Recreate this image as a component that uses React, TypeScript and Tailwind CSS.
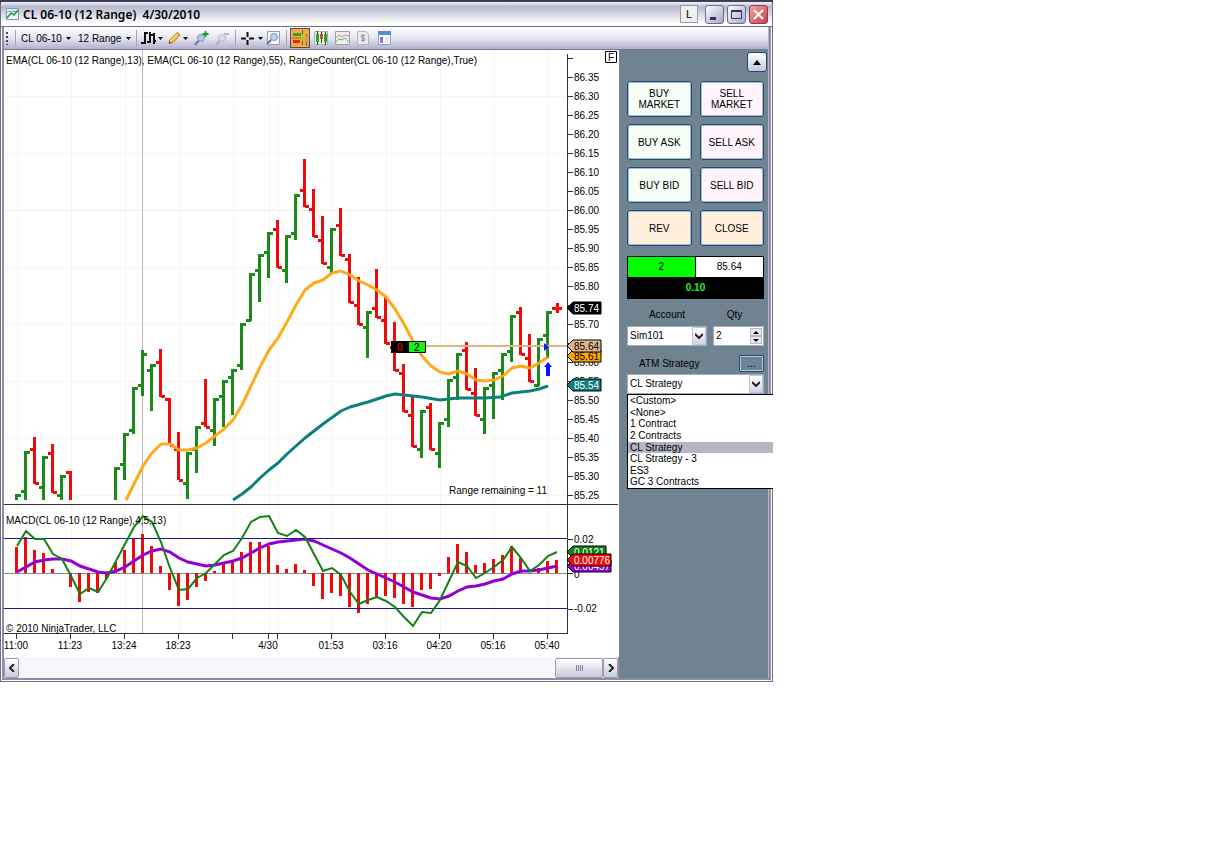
// App.tsx
// Chart window: title bar, toolbar, price + MACD chart and the order entry panel.

import { useState, type ReactNode } from 'react'

// One bar: x, high, low, open, close (canvas units), up or down
type Bar = [number, number, number, number, number, 'u' | 'd']

const BARS: Bar[] = [
  [17, 494, 500, 0, 495, 'u'],
  [26, 451, 500, 491, 452, 'u'],
  [35, 437, 484, 449, 483, 'd'],
  [44, 456, 500, 487, 457, 'u'],
  [53, 444, 493, 453, 492, 'd'],
  [62, 475, 500, 495, 476, 'u'],
  [71, 471, 500, 472, 0, 'd'],
  [116, 467, 500, 0, 468, 'u'],
  [125, 433, 480, 464, 434, 'u'],
  [134, 387, 434, 430, 388, 'u'],
  [143, 350, 396, 385, 354, 'u'],
  [152, 364, 411, 370, 365, 'u'],
  [161, 349, 397, 362, 396, 'd'],
  [170, 398, 445, 399, 445, 'd'],
  [179, 432, 480, 449, 480, 'd'],
  [188, 452, 499, 483, 453, 'u'],
  [197, 426, 473, 449, 427, 'u'],
  [206, 379, 427, 423, 427, 'd'],
  [215, 398, 446, 430, 399, 'u'],
  [224, 380, 427, 396, 381, 'u'],
  [233, 369, 415, 377, 370, 'u'],
  [242, 323, 370, 365, 324, 'u'],
  [251, 273, 321, 320, 274, 'u'],
  [260, 254, 302, 270, 255, 'u'],
  [269, 232, 278, 252, 233, 'u'],
  [278, 220, 268, 229, 267, 'd'],
  [287, 235, 283, 270, 236, 'u'],
  [296, 194, 240, 233, 195, 'u'],
  [305, 159, 207, 190, 206, 'd'],
  [314, 189, 237, 209, 236, 'd'],
  [323, 216, 264, 240, 263, 'd'],
  [332, 228, 274, 267, 229, 'u'],
  [341, 208, 256, 225, 255, 'd'],
  [350, 254, 303, 259, 302, 'd'],
  [359, 277, 325, 305, 324, 'd'],
  [368, 311, 358, 327, 312, 'u'],
  [377, 269, 318, 308, 317, 'd'],
  [386, 296, 344, 320, 343, 'd'],
  [395, 322, 371, 347, 370, 'd'],
  [404, 364, 412, 373, 411, 'd'],
  [413, 397, 447, 415, 446, 'd'],
  [422, 410, 458, 449, 411, 'u'],
  [431, 403, 450, 407, 449, 'd'],
  [440, 422, 468, 453, 423, 'u'],
  [449, 379, 427, 419, 380, 'u'],
  [458, 353, 400, 377, 354, 'u'],
  [467, 342, 390, 350, 389, 'd'],
  [476, 368, 416, 393, 415, 'd'],
  [485, 387, 434, 419, 388, 'u'],
  [494, 372, 419, 385, 373, 'u'],
  [503, 353, 400, 370, 354, 'u'],
  [512, 315, 362, 351, 316, 'u'],
  [521, 307, 355, 312, 354, 'd'],
  [530, 334, 382, 358, 381, 'd'],
  [539, 338, 386, 385, 339, 'u'],
  [548, 311, 358, 335, 312, 'u'],
]

const EMA_FAST =
  '126,500 134,484 143,466 152,453 161,444 170,444 179,450 188,450 197,448 206,443 215,436 224,429 233,420 242,405 251,386 260,367 269,350 278,338 287,322 296,305 305,290 314,283 323,280 332,273 341,271 350,275 359,281 368,285 377,290 386,297 395,309 404,324 413,341 422,356 431,366 440,372 449,374 458,371 467,374 476,380 485,381 494,380 503,376 512,368 521,366 530,368 539,363 548,357'
const EMA_SLOW =
  '233,500 242,494 251,487 260,478 269,470 278,463 287,454 305,438 323,424 341,411 350,407 368,402 386,396 395,394 404,395 422,397 440,400 449,399 458,398 485,398 500,397 512,393 530,391 539,389 548,386'

// Histogram tips and the two MACD lines, one value per bar
const HISTOGRAM = [
  547, 537, 550, 553, 569, 573, 587, 602, 592, 593, 579, 562, 550, 539, 534, 546, 566, 590, 606, 600,
  587, 581, 571, 564, 562, 552, 542, 542, 546, 565, 569, 564, 570, 586, 599, 593, 596, 607, 613, 604,
  597, 596, 598, 604, 607, 590, 589, 576, 557, 544, 552, 565, 563, 559, 555, 546, 558, 573, 568, 561,
  560,
]
const MACD_LINE = [
  546, 531, 539, 539, 554, 559, 576, 594, 588, 592, 578, 561, 544, 527, 516, 522, 542, 568, 590, 589,
  578, 573, 564, 555, 551, 538, 522, 517, 516, 533, 536, 530, 537, 554, 571, 568, 575, 592, 604, 600,
  597, 601, 607, 617, 626, 612, 613, 600, 581, 562, 566, 578, 573, 567, 560, 547, 558, 571, 565, 556,
  552,
]
const SIGNAL_LINE = [
  572, 567, 562, 560, 559, 559, 561, 566, 569, 572, 573, 571, 567, 561, 555, 551, 549, 552, 558, 562,
  564, 566, 565, 563, 561, 558, 553, 548, 544, 542, 541, 540, 539, 541, 545, 549, 553, 558, 564, 570,
  574, 578, 582, 587, 592, 595, 598, 599, 596, 591, 587, 586, 584, 581, 579, 574, 571, 571, 570, 568,
  566,
]

const TIMES: [number, string][] = [
  [17, '11:00'],
  [71, '11:23'],
  [125, '13:24'],
  [179, '18:23'],
  [233, ''],
  [269, '4/30'],
  [278, ''],
  [332, '01:53'],
  [386, '03:16'],
  [440, '04:20'],
  [494, '05:16'],
  [548, '05:40'],
]

const PRICES = Array.from({ length: 23 }, (_, i) => 86.35 - i * 0.05)
// These axis labels sit fully behind a price tag
const COVERED = ['85.75', '85.65']
const STRATEGIES = ['<Custom>', '<None>', '1 Contract', '2 Contracts', 'CL Strategy', 'CL Strategy - 3', 'ES3', 'GC 3 Contracts']

const priceY = (price: number) => Math.round(210 + (86 - price) * 380)
const toPoints = (values: number[]) => values.map((y, i) => `${17 + i * 9},${y}`).join(' ')

function PriceTag({ y, right, fill, color, text }: { y: number; right: number; fill: string; color: string; text: string }) {
  return (
    <g>
      <path d={`M567 ${y}L573 ${y - 6}H${right}V${y + 6}H573Z`} fill={fill} stroke="#000" strokeWidth="1" />
      <text x="574" y={y + 4} fill={color}>
        {text}
      </text>
    </g>
  )
}

function Chart() {
  return (
    <svg viewBox="4 50 615 607" className="block w-full bg-white font-['Liberation_Sans',sans-serif] text-[10px]" role="img" aria-label="CL 06-10 price chart">
      {/* Grid */}
      <g stroke="#f6f6ef" shapeRendering="crispEdges">
        {TIMES.map(([x]) => (
          <path key={x} d={`M${x}.5 50V633`} />
        ))}
        {[96, 153, 210, 267, 324, 381, 438, 495].map((y) => (
          <path key={y} d={`M4 ${y}.5H567`} stroke={y === 210 ? '#efefe0' : '#f6f6ef'} />
        ))}
      </g>
      <path d="M142.5 50V633" stroke="#b8b8b8" />

      {/* Axes */}
      <g stroke="#333" shapeRendering="crispEdges">
        <path d="M4 504.5H618M4 633.5H567.5M567.5 54V633.5M567 58.5H573" />
        {PRICES.map((p) => (
          <path key={p} d={`M567 ${priceY(p)}.5H573`} />
        ))}
        {TIMES.map(([x]) => (
          <path key={x} d={`M${x - 1}.5 633V639`} />
        ))}
        <path d="M567 539.5H573M567 573.5H573M567 609.5H573" />
      </g>
      {PRICES.filter((p) => !COVERED.includes(p.toFixed(2))).map((p) => (
        <text key={p} x="574" y={priceY(p) + 4}>
          {p.toFixed(2)}
        </text>
      ))}
      <text x="574" y="543">0.02</text>
      <text x="574" y="578">0</text>
      <text x="574" y="612">-0.02</text>
      {TIMES.map(([x, label]) => (
        <text key={x} x={x - 1} y="649" textAnchor="middle">
          {label}
        </text>
      ))}

      {/* Price bars */}
      <g strokeWidth="3" fill="none" shapeRendering="crispEdges">
        {BARS.map(([x, high, low, open, close, dir]) => (
          <path
            key={x}
            stroke={dir === 'u' ? '#1b8a1b' : '#f00a0a'}
            d={`M${x - 0.5} ${high}V${low}${open ? `M${x - 5} ${open}.5H${x}` : ''}${close ? `M${x} ${close}.5H${x + 4}` : ''}`}
          />
        ))}
        <path d="M552 308.5H562M557 303V313" stroke="#f00a0a" />
      </g>
      <g fill="none" strokeLinejoin="round">
        <path d="M426 346H567" stroke="#deb887" strokeWidth="2" shapeRendering="crispEdges" />
        <polyline points={EMA_SLOW} stroke="#0d807c" strokeWidth="3" />
        <polyline points={EMA_FAST} stroke="#ffa510" strokeWidth="3" strokeOpacity="0.95" />
      </g>
      <path d="M544 343V351L549 347Z" fill="#1c1ce0" />
      <path d="M548 362L552 367H550V376H546V367H544Z" fill="#1010ff" />

      {/* Position marker */}
      <path d="M391 341H409V353H391Z" />
      <path d="M408.5 341.5H425.5V352.5H408.5Z" fill="#1cf01c" stroke="#000" />
      <text x="397" y="351" fill="#f00">0</text>
      <text x="414" y="351">2</text>

      <PriceTag y={308} right={601} fill="#000" color="#fff" text="85.74" />
      <PriceTag y={356} right={601} fill="#ffa500" color="#000" text="85.61" />
      <PriceTag y={346} right={601} fill="#deb887" color="#000" text="85.64" />
      <PriceTag y={385} right={601} fill="#0d807c" color="#fff" text="85.54" />

      {/* MACD */}
      <path d="M4 573.5H567" stroke="#888" shapeRendering="crispEdges" />
      <g fill="none">
        <path d={HISTOGRAM.map((y, i) => `M${16.5 + i * 9} 573V${y}`).join('')} stroke="#f00a0a" strokeWidth="3" shapeRendering="crispEdges" />
        <polyline points={toPoints(SIGNAL_LINE)} stroke="#9400d3" strokeWidth="3" />
        <path d="M4 538.5H567M4 608.5H567" stroke="#1a1a8f" shapeRendering="crispEdges" />
        <polyline points={toPoints(MACD_LINE)} stroke="#128012" strokeWidth="2" />
      </g>
      <PriceTag y={552} right={606} fill="#128012" color="#fff" text="0.0121" />
      <PriceTag y={566} right={611} fill="#9400d3" color="#fff" text="0.00457" />
      <PriceTag y={560} right={611} fill="#f00a0a" color="#fff" text="0.00776" />

      <text x="6" y="64">
        EMA(CL 06-10 (12 Range),13), EMA(CL 06-10 (12 Range),55), RangeCounter(CL 06-10 (12 Range),True)
      </text>
      <text x="6" y="524">MACD(CL 06-10 (12 Range),4,5,13)</text>
      <text x="6" y="632">© 2010 NinjaTrader, LLC</text>
      <text x="547" y="494" textAnchor="end">Range remaining = 11</text>

      <path d="M605.5 51.5H616.5V62.5H605.5Z" fill="#fff" stroke="#000" />
      <text x="611" y="61" textAnchor="middle">F</text>
    </svg>
  )
}

const Caret = () => (
  <svg width="5" height="3" viewBox="0 0 5 3" className="shrink-0">
    <path d="M0 0H5L2.5 3Z" />
  </svg>
)

const Separator = () => <span className="mx-[3px] h-4 w-px shrink-0 bg-[#a3a3b5]" />

function ToolButton({ label, className = 'w-5 justify-center', children }: { label: string; className?: string; children: ReactNode }) {
  return (
    <button aria-label={label} className={`flex h-5 shrink-0 items-center ${className}`}>
      {children}
    </button>
  )
}

function Toolbar() {
  return (
    <div className="flex h-[23px] items-center border-b border-[#77758f] bg-linear-to-b from-white via-[#e6e6f2] to-[#b3b1cc] text-[10px]">
      <svg width="8" height="14" viewBox="0 0 8 14" className="shrink-0" fill="#444458">
        <path d="M2 1h2v2H2zM2 5h2v2H2zM2 9h2v2H2zM2 13h2v1H2z" />
      </svg>
      <Separator />
      <button className="flex w-[54px] shrink-0 items-center justify-between px-0.5 whitespace-nowrap">
        CL 06-10 <Caret />
      </button>
      <button className="ml-[3px] flex w-[57px] shrink-0 items-center justify-between px-0.5 whitespace-nowrap">
        12 Range <Caret />
      </button>
      <Separator />
      <ToolButton label="Bar style" className="w-6 gap-0.5 pl-px">
        <svg width="15" height="14" viewBox="0 0 15 14" fill="#111">
          <path d="M3 1H5V13H3ZM0 11H3V13H0ZM5 1H7V3H5ZM8 1H10V12H8ZM6 10H8V12H6ZM12 2H14V13H12ZM10 3H12V5H10ZM14 9H15V11H14Z" />
        </svg>
        <Caret />
      </ToolButton>
      <ToolButton label="Draw" className="w-6 gap-0.5 pl-1">
        <svg width="14" height="14" viewBox="0 0 14 14">
          <path d="M1 13L2 9L10 1L13 4L5 12Z" fill="#f5c33b" stroke="#a8741a" />
          <path d="M3 10L11 2" stroke="#fff0a0" />
          <path d="M10 1L13 4L12 5L9 2Z" fill="#e58a6a" />
          <path d="M1 13L2 11L3 12Z" fill="#222" />
        </svg>
        <Caret />
      </ToolButton>
      <div className="ml-[3px] flex gap-px">
        <ToolButton label="Zoom in">
          <svg width="15" height="15" viewBox="0 0 15 15">
            <path d="M1 14L5 9" stroke="#60758c" strokeWidth="2" />
            <circle cx="7" cy="7" r="3.5" fill="#a9cdea" stroke="#7895b0" />
            <path d="M11.500 0V6M8.500 3H14.500" stroke="#21a321" strokeWidth="2" />
          </svg>
        </ToolButton>
        <ToolButton label="Zoom out">
          <svg width="15" height="15" viewBox="0 0 15 15" opacity="0.6">
            <path d="M1 14L5 9" stroke="#999" strokeWidth="2" />
            <circle cx="7" cy="7" r="3.5" fill="#d5d5dd" stroke="#aaa" />
            <path d="M9 3H14" stroke="#999" strokeWidth="2" />
          </svg>
        </ToolButton>
      </div>
      <Separator />
      <ToolButton label="Crosshair" className="w-6 gap-1 pl-0.5">
        <svg width="13" height="13" viewBox="0 0 13 13" stroke="#111" strokeWidth="2">
          <path d="M6.500 0V5M6.500 8V13M0 6.500H5M8 6.500H13" />
        </svg>
        <Caret />
      </ToolButton>
      <ToolButton label="Data box">
        <svg width="14" height="14" viewBox="0 0 14 14">
          <path d="M1.500.5H13.500V13.500H1.500Z" fill="#f8f8fc" stroke="#9a9aae" />
          <path d="M1 13L5 9" stroke="#60758c" strokeWidth="2" />
          <circle cx="8" cy="6" r="3.500" fill="#b4d6f3" stroke="#7895b0" />
        </svg>
      </ToolButton>
      <Separator />
      <div className="flex gap-px">
        <ToolButton label="Chart trader" className="w-5 justify-center border border-[#4b4b6f] bg-[#fba83c]">
          <svg width="16" height="16" viewBox="0 0 16 16">
            <path d="M1 3H9V6H1Z" fill="#3aa02c" />
            <path d="M1 10H8V13H1Z" fill="#e02a12" />
            <path d="M0 8H9" stroke="#8a6a22" />
            <path d="M10.500 0V15M14.500 4V16" stroke="#5a6a1a" />
            <path d="M9 4H12V11H9Z" fill="#a6cf30" />
            <path d="M13 6H16V13H13Z" fill="#cda040" />
          </svg>
        </ToolButton>
        <ToolButton label="Indicators">
          <svg width="14" height="14" viewBox="0 0 14 14">
            <path d="M.5.5H13.500V13.500H.5Z" fill="#e8f0e0" stroke="#a9b5a4" />
            <path d="M3.500 0V14M7.500 1V12M11.500 1V14" stroke="#333" />
            <path d="M2 3H5V11H2Z" fill="#2aa52a" />
            <path d="M6 3H9V8H6Z" fill="#e04030" />
            <path d="M10 3H13V11H10Z" fill="#2aa52a" />
          </svg>
        </ToolButton>
        <ToolButton label="Strategies">
          <svg width="15" height="14" viewBox="0 0 15 14" fill="none">
            <path d="M.5.5H14.500V13.500H.5Z" fill="#eef0f0" stroke="#9aa0a8" />
            <path d="M1 7L4 4L7 6L10 4L14 5" stroke="#d98a80" />
            <path d="M1 11L4 8L7 9L10 7L14 11" stroke="#69b069" />
          </svg>
        </ToolButton>
        <ToolButton label="Account performance">
          <svg width="12" height="14" viewBox="0 0 12 14" fill="none">
            <path d="M.5.5H9L11.500 3V13.500H.5Z" fill="#e8e8ee" stroke="#b5b5c0" />
            <path d="M8 5C7 4 4 4 4 5.500C4 7.500 8 6.500 8 8.500C8 10 5 10 4 9M6 3V11" stroke="#8b8b95" />
          </svg>
        </ToolButton>
        <ToolButton label="Properties">
          <svg width="13" height="14" viewBox="0 0 13 14">
            <path d="M.5.5H12.500V13.500H.5Z" fill="#fff" stroke="#8a9cc8" />
            <path d="M0 0H13V4H0Z" fill="#4a90e0" />
            <path d="M2 6H5V12H2Z" fill="#8a7ae0" />
            <path d="M7 7H11M7 9H11M7 11H11" stroke="#c8d4ee" />
          </svg>
        </ToolButton>
      </div>
    </div>
  )
}

function TitleBar() {
  return (
    <div className="flex h-[27px] items-center gap-[3px] border-t-2 border-b border-t-[#3a3f55] border-b-[#6f6d80] bg-linear-to-b from-[#f4f4fa] via-[#b9b9cf] via-20% to-white to-90% pr-1 pl-[5px]">
      <svg width="13" height="12" viewBox="0 0 13 12" fill="none" className="shrink-0">
        <path d="M.5.5H12.500V11.500H.5Z" fill="#eaf6fa" stroke="#7d9ab0" />
        <path d="M1 4L6 3L12 4" stroke="#58a5dc" />
        <path d="M1 10L5 5L8 7L12 2" stroke="#27953f" strokeWidth="1.500" />
      </svg>
      <h1 className="flex-1 truncate pt-0.5 pl-px font-['Noto_Sans','Open_Sans',sans-serif] text-[12px] leading-5 font-semibold whitespace-pre">
        CL 06-10 (12 Range)  4/30/2010
      </h1>
      <button className="mr-1 h-[18px] w-[18px] border border-[#9a9a9a] bg-[#efefef] text-[11px] leading-4">L</button>
      <button aria-label="Minimize" className="h-[19px] w-[19px] rounded-[3px] border border-[#6d6d92] bg-linear-to-br from-white to-[#a7a7c6]">
        <svg width="17" height="17" viewBox="0 0 17 17">
          <path d="M4 11H10V14H4Z" fill="#33335c" />
        </svg>
      </button>
      <button aria-label="Maximize" className="h-[19px] w-[19px] rounded-[3px] border border-[#6d6d92] bg-linear-to-br from-white to-[#a7a7c6]">
        <svg width="17" height="17" viewBox="0 0 17 17" fill="none" stroke="#33335c">
          <path d="M3.500 4.500H13.500V12.500H3.500ZM3 5.500H14" />
        </svg>
      </button>
      <button aria-label="Close" className="h-[19px] w-[19px] rounded-[3px] border border-[#8d3d48] bg-linear-to-br from-[#f0a0a0] to-[#cf3c48]">
        <svg width="17" height="17" viewBox="0 0 17 17" stroke="#fff" strokeWidth="2">
          <path d="M4 4L13 13M13 4L4 13" />
        </svg>
      </button>
    </div>
  )
}

function ScrollBar() {
  return (
    <div className="flex h-[21px] items-stretch border-r border-[#8f8da3] bg-[#f7f7fb] pt-px">
      <button aria-label="Scroll left" className="flex w-[15px] items-center justify-center rounded-xs border border-[#9a9ab0] bg-linear-to-b from-white to-[#c9c9dc]">
        <svg width="6" height="8" viewBox="0 0 6 8" fill="none" stroke="#222" strokeWidth="2">
          <path d="M5 0L1 4L5 8" />
        </svg>
      </button>
      <div className="flex flex-1 justify-end">
        <div className="flex w-12 items-center justify-center gap-px rounded-xs border border-[#9a9ab0] bg-linear-to-b from-white to-[#c9c9dc]">
          <span className="h-[6px] w-px bg-[#8585a0]" />
          <span className="h-[6px] w-px bg-[#8585a0]" />
          <span className="h-[6px] w-px bg-[#8585a0]" />
          <span className="h-[6px] w-px bg-[#8585a0]" />
        </div>
      </div>
      <button aria-label="Scroll right" className="flex w-[15px] items-center justify-center rounded-xs border border-[#9a9ab0] bg-linear-to-b from-white to-[#c9c9dc]">
        <svg width="6" height="8" viewBox="0 0 6 8" fill="none" stroke="#222" strokeWidth="2">
          <path d="M1 0L5 4L1 8" />
        </svg>
      </button>
    </div>
  )
}

const ORDER_BUTTONS: [string, string][] = [
  ['BUY MARKET', 'bg-[#f5fff8]'],
  ['SELL MARKET', 'bg-[#fff4fb]'],
  ['BUY ASK', 'bg-[#f5fff8]'],
  ['SELL ASK', 'bg-[#fff4fb]'],
  ['BUY BID', 'bg-[#f5fff8]'],
  ['SELL BID', 'bg-[#fff4fb]'],
  ['REV', 'bg-[#ffeedb]'],
  ['CLOSE', 'bg-[#ffeedb]'],
]

function Combo({ id, value, options, onChange }: { id: string; value: string; options: string[]; onChange: (v: string) => void }) {
  return (
    <div className="relative">
      <select
        id={id}
        value={value}
        onChange={(e) => onChange(e.target.value)}
        className="block h-5 w-full appearance-none border border-[#a9a9bd] bg-white pl-0.5 text-[10px]"
      >
        {options.map((o) => (
          <option key={o}>{o}</option>
        ))}
      </select>
      <span className="pointer-events-none absolute top-px right-px flex h-[18px] w-[14px] items-center justify-center border border-[#c3c3d4] bg-linear-to-b from-white to-[#d3d3e2]">
        <svg width="8" height="6" viewBox="0 0 8 6" fill="none" stroke="#222" strokeWidth="2">
          <path d="M0 1L4 5L8 1" />
        </svg>
      </span>
    </div>
  )
}

function OrderPanel() {
  const [account, setAccount] = useState('Sim101')
  const [strategy, setStrategy] = useState('CL Strategy')
  const [qty, setQty] = useState(2)

  return (
    <div className="flex w-[149px] shrink-0 flex-col bg-[#708391] pr-1 pl-2 text-[10px] leading-3">
      <button
        aria-label="Collapse"
        className="mt-0.5 -mr-[3px] flex h-5 w-5 items-center justify-center self-end rounded-[3px] border border-[#1d4a78] bg-linear-to-b from-white to-[#c5c7de]"
      >
        <svg width="8" height="5" viewBox="0 0 8 5">
          <path d="M0 5L4 0L8 5Z" />
        </svg>
      </button>

      <div className="mt-[9px] grid grid-cols-2 gap-x-2 gap-y-[7px]">
        {ORDER_BUTTONS.map(([label, bg]) => (
          <button key={label} className={`h-9 rounded-[3px] border border-[#1d4a78] px-1 leading-[11px] ring-1 ring-[#a9bccb] ring-inset ${bg}`}>
            {label}
          </button>
        ))}
      </div>

      <div className="mt-[10px] grid grid-cols-2 border border-black bg-black text-center leading-5">
        <div className="border-r border-black bg-[#00ff00]">2</div>
        <div className="bg-white">85.64</div>
        <div className="col-span-2 pt-px font-bold text-[#1cf01c]">0.10</div>
      </div>

      <div className="mt-[10px] grid grid-cols-[80px_1fr] gap-x-[6px] gap-y-[5px]">
        <label htmlFor="account" className="text-center">Account</label>
        <label htmlFor="qty" className="pr-2 text-center">Qty</label>
        <Combo id="account" value={account} options={['Sim101']} onChange={setAccount} />
        <div className="flex h-5 border border-[#a9a9bd] bg-white p-px">
          <input id="qty" value={qty} onChange={(e) => setQty(Number(e.target.value) || 0)} className="w-0 flex-1 bg-transparent pl-px outline-none" />
          <div className="flex w-3 flex-col">
            <button aria-label="Increase" onClick={() => setQty(qty + 1)} className="flex flex-1 items-center justify-center border border-[#b5b5c8] bg-[#e8e8f0]">
              <svg width="6" height="3" viewBox="0 0 6 3">
                <path d="M0 3L3 0L6 3Z" />
              </svg>
            </button>
            <button aria-label="Decrease" onClick={() => setQty(qty - 1)} className="flex flex-1 items-center justify-center border border-[#b5b5c8] bg-[#e8e8f0]">
              <svg width="6" height="3" viewBox="0 0 6 3">
                <path d="M0 0H6L3 3Z" />
              </svg>
            </button>
          </div>
        </div>
      </div>

      <div className="mt-[9px] mb-[2px] flex items-center justify-between pl-3">
        <label htmlFor="strategy">ATM Strategy</label>
        <button className="h-[17px] w-[25px] rounded-xs border border-[#1d4a78] leading-3 ring-1 ring-[#bccbdc] ring-inset">...</button>
      </div>
      <div className="relative">
        <Combo id="strategy" value={strategy} options={STRATEGIES} onChange={setStrategy} />
        {/* Open list, runs past the window edge */}
        <ul className="absolute top-5 -right-[9px] left-0 z-10 grid h-[95px] grid-rows-8 border border-r-0 border-black bg-white">
          {STRATEGIES.map((name) => (
            <li key={name} className={`pl-0.5 leading-3 ${name === strategy ? 'bg-[#b5b5c5]' : ''}`}>
              {name}
            </li>
          ))}
        </ul>
      </div>
    </div>
  )
}

export default function App() {
  return (
    <div className="min-h-screen bg-white font-['Liberation_Sans',Arial,sans-serif] text-black">
      <div className="max-w-[773px] bg-[#3a3f55]">
        <div className="rounded-t-md border-x border-b border-[#6f6d80] bg-white">
          <TitleBar />
          <div className="mx-px mb-px border-x-2 border-b-2 border-[#8f8da6] bg-[#b4b2c8] pr-px">
            <Toolbar />
            <div className="flex">
              <div className="min-w-0 flex-1">
                <Chart />
                <ScrollBar />
              </div>
              <OrderPanel />
            </div>
          </div>
        </div>
      </div>
    </div>
  )
}
